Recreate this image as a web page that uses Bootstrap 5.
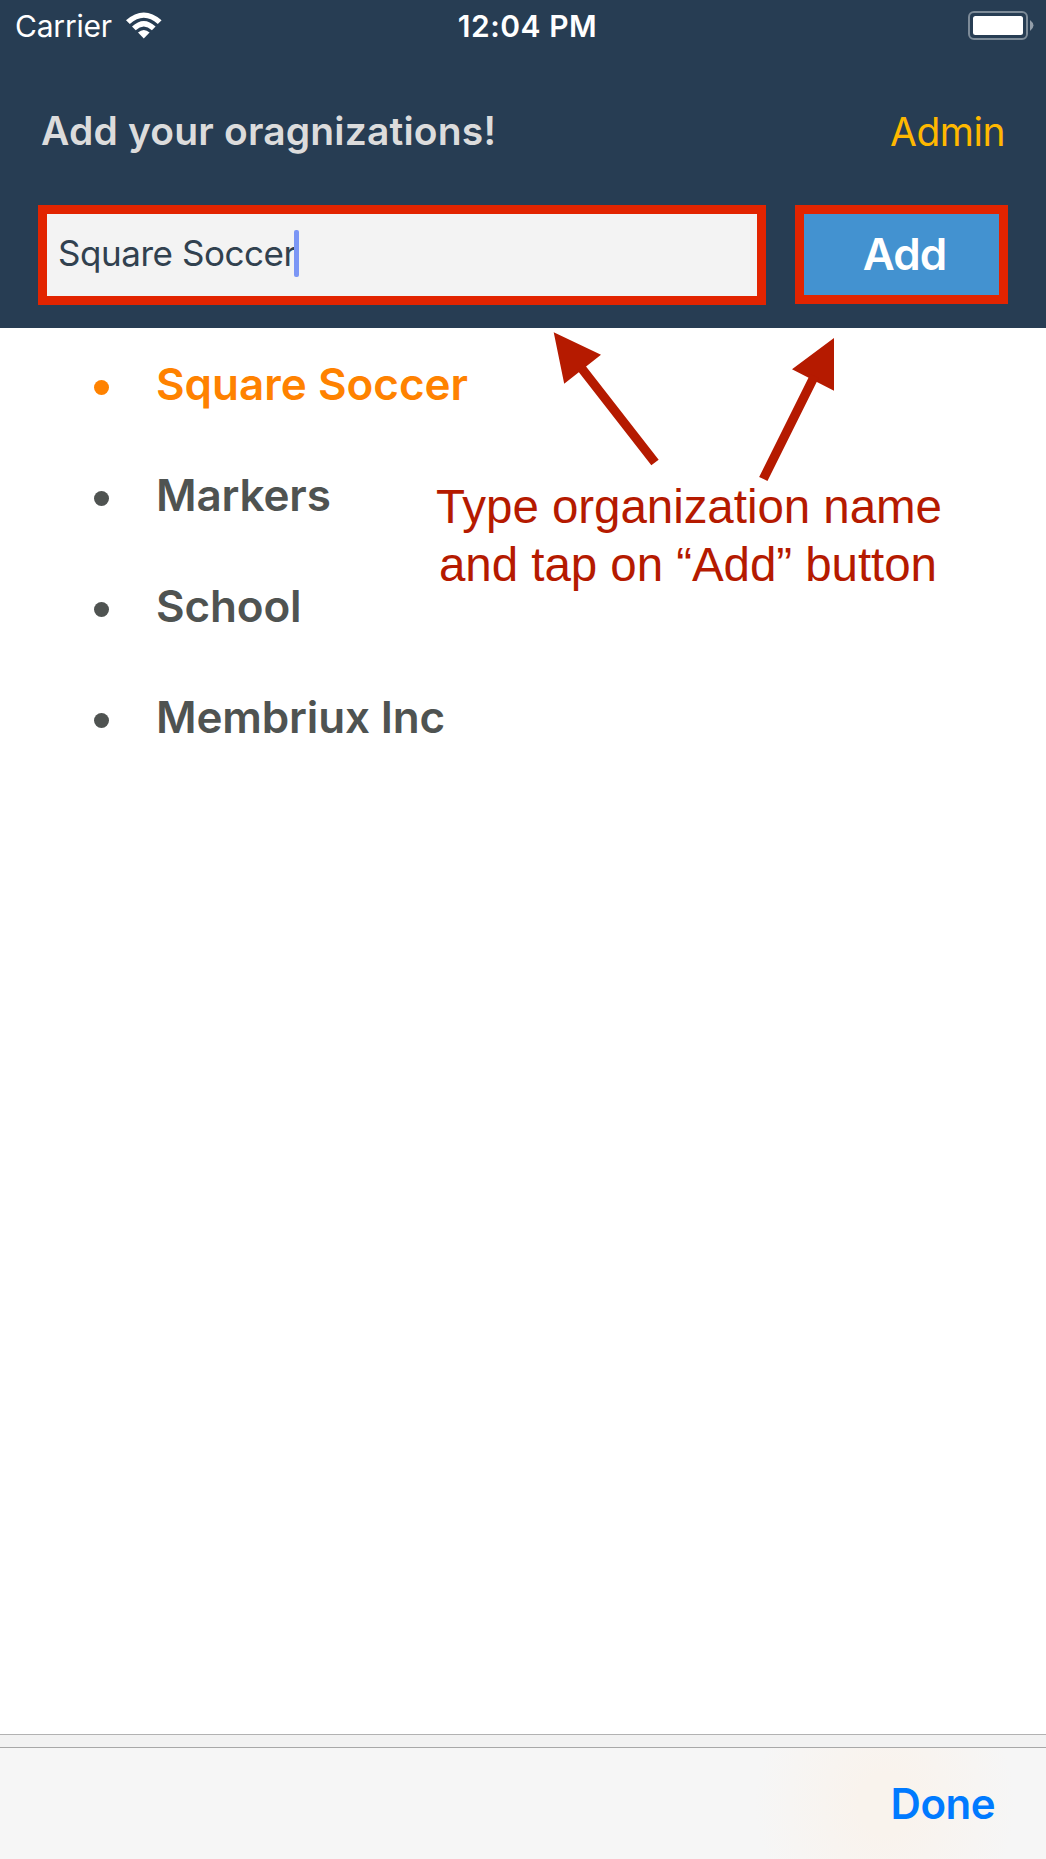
<!DOCTYPE html>
<html lang="en">
<head>
<meta charset="utf-8">
<meta name="viewport" content="width=device-width, initial-scale=1">
<title>Organizations</title>
<link href="https://cdn.jsdelivr.net/npm/bootstrap@5.3.0/dist/css/bootstrap.min.css" rel="stylesheet">
<style>
body{font-family:Inter,"Liberation Sans",sans-serif;color:#4f5351;line-height:1}
.screen{height:1859px;overflow:hidden}
.app-head{background:#273d53;height:328px}
.status{height:52px;font-size:30px;padding:0 11px 0 15px}
.status>div{flex:1 1 0}
.carrier{letter-spacing:-.2px}
.clock{letter-spacing:.5px;margin-left:5px}
.wifi-icon{margin:0 0 2px 14px}
.title-row{height:153px;padding:6px 41px 0;font-size:39px}
.page-title{color:#dcdcdc;font-size:39px;letter-spacing:.17px}
.admin-link{color:#ffb800;letter-spacing:-.5px}
.form-row-top{padding:0 38px;gap:29px}
.org-field{width:728px;height:100px;border:9px solid #e22400;background:#f3f3f3;color:#31414f;font-size:35px;padding:0 0 3px 11px}
.org-field span{letter-spacing:-.45px}
.caret{width:5px;height:47px;background:#7b96f5;border-radius:2px;margin-left:-2px}
.add-btn{width:213px;height:99px;border:9px solid #e22400!important;background:#4392d0!important;color:#fff!important;font-size:44px;font-weight:600;line-height:1}
.add-btn span{display:block;letter-spacing:-.9px;padding:0 0 2px 6px}
.org-list{font-size:44px;font-weight:600;letter-spacing:-.15px}
.org-list li{height:111px;padding-left:94px}
.dot{width:15px;height:15px;border-radius:50%;background:currentColor;margin:8px 47px 0 0}
.picked{color:#ff8200;letter-spacing:0}
.hint{left:0;top:478px;width:504px;margin-left:436px;color:#b51a00;font:47.500px/58px "Liberation Sans",Arial,sans-serif;letter-spacing:-.05px;white-space:nowrap}
.arrows{left:540px;top:328px}
.bottom-strip{height:14px;background:#f2f2f2;border-top:1px solid #b2b2b2;border-bottom:1px solid #a8a8a8}
.bottom-bar{height:111px;padding-right:51px;background:radial-gradient(ellipse 130px 150px at 885px 50%,#f9f3ed 20%,#f9f3ed00),#f6f6f6}
.done-btn{color:#007aff;font-size:42px;font-weight:600;letter-spacing:-.5px}
</style>
<script src="https://cdn.jsdelivr.net/npm/bootstrap@5.3.0/dist/js/bootstrap.bundle.min.js"></script>
</head>
<body class="bg-white">
<div class="screen d-flex flex-column position-relative">
  <header class="app-head">
    <div class="status d-flex align-items-center text-white">
      <div class="d-flex align-items-center"><span class="carrier">Carrier</span>
        <svg class="wifi-icon" width="36" height="27" viewBox="0 0 36 27" fill="#fff"><path d="M0 8.300Q17.800-7.300 35.600 8.300L31.800 12Q17.800-.5 3.800 12Z"/><path d="M6 14.500Q17.800 3.300 29.600 14.500L25.900 18.200Q17.800 10.800 9.700 18.200Z"/><path d="M12 20.600Q17.800 15.500 23.600 20.600L17.800 26.400Z"/></svg>
      </div>
      <span class="clock fw-semibold">12:04 PM</span>
      <div class="d-flex justify-content-end">
        <svg width="67" height="30" viewBox="0 0 67 30"><rect x="1" y="1" width="58" height="27" rx="5" fill="none" stroke="#7d8b98" stroke-width="2"/><rect x="5" y="5" width="50" height="19" rx="2.500" fill="#fff"/><path d="M62 9Q69 14.500 62 20Z" fill="#939eaa"/></svg>
      </div>
    </div>
    <div class="title-row d-flex align-items-center justify-content-between">
      <h1 class="page-title fw-semibold m-0">Add your oragnizations!</h1>
      <a class="admin-link text-decoration-none" href="#">Admin</a>
    </div>
    <div class="form-row-top d-flex">
      <div class="org-field d-flex align-items-center"><span>Square Soccer</span><i class="caret"></i></div>
      <button class="add-btn btn rounded-0 p-0" type="button"><span>Add</span></button>
    </div>
  </header>
  <main class="flex-grow-1">
    <ul class="org-list list-unstyled m-0">
      <li class="picked d-flex align-items-center"><i class="dot"></i><span>Square Soccer</span></li>
      <li class="d-flex align-items-center"><i class="dot"></i><span>Markers</span></li>
      <li class="d-flex align-items-center"><i class="dot"></i><span>School</span></li>
      <li class="d-flex align-items-center"><i class="dot"></i><span>Membriux Inc</span></li>
    </ul>
  </main>
  <svg class="arrows position-absolute" width="300" height="160" viewBox="540 328 300 160" fill="#b51a00" stroke="#b51a00"><path stroke="none" d="M553.700 332.300 601 354.800 564.200 383.800ZM834 338V390.700L792 369.300Z"/><path stroke-width="9.300" d="M581 367.500 655 462.500M814.500 376 763.300 479"/></svg>
  <div class="hint position-absolute text-center"><span>Type organization name</span><br><span>and tap on “Add” button</span></div>
  <div class="bottom-strip"></div>
  <footer class="bottom-bar d-flex align-items-center justify-content-end"><a class="done-btn text-decoration-none" href="#">Done</a></footer>
</div>
</body>
</html>
